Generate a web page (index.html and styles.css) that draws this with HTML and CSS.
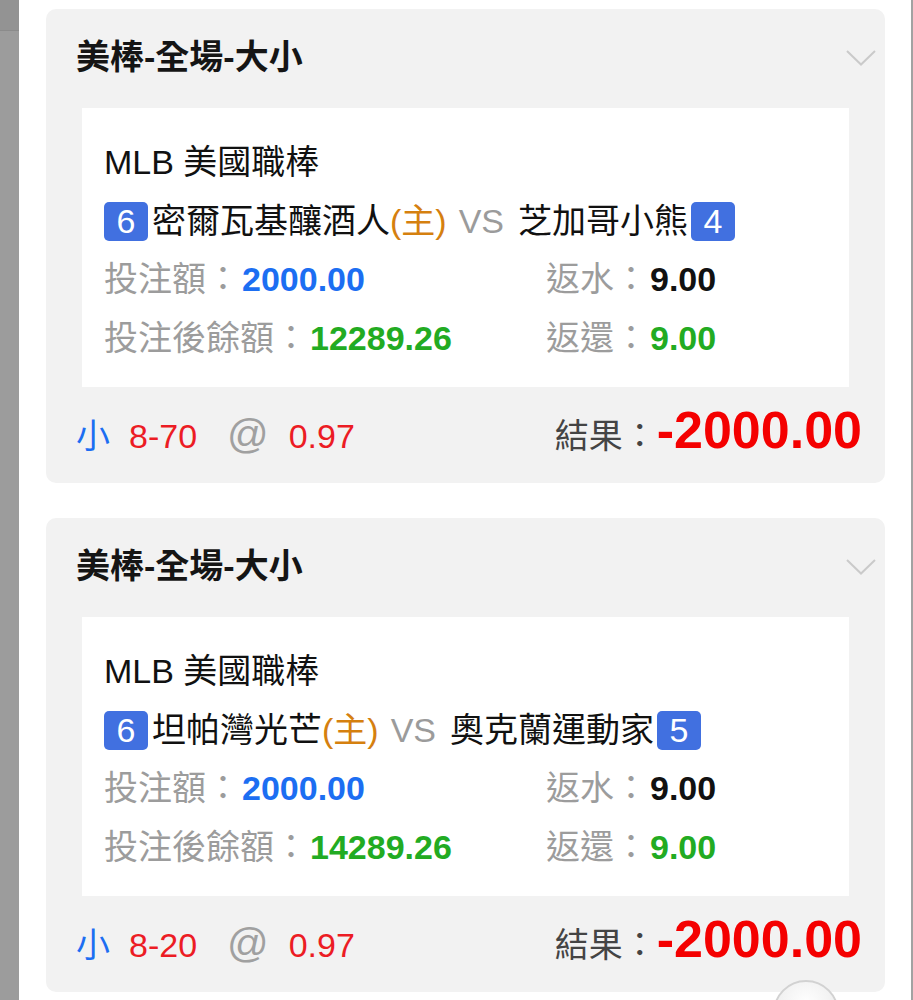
FILE: index.html
```html
<!DOCTYPE html>
<html lang="zh-Hant">
<head>
  <meta charset="UTF-8" />
  <title>注單紀錄</title>
  <meta name="viewport" content="width=device-width, initial-scale=1.0" />
  <link rel="stylesheet" href="styles.css">
</head>
<body>

  <div class="screen">
    <div class="rail-left"><div class="rail-top"></div></div>

    <main class="panel">

      <!-- bet #1 -->
      <section class="bet-card">
        <header class="bet-head">
          <h2>美棒-全場-大小</h2>
          <svg class="chevron" width="30" height="16" viewBox="0 0 30 16">
            <polyline points="1,1 15,14.5 29,1" fill="none" stroke="#cacaca" stroke-width="2" />
          </svg>
        </header>
        <div class="bet-body">
          <div class="line">MLB 美國職棒</div>
          <div class="line"><span class="rank">6</span>密爾瓦基釀酒人<span class="home">(主)</span><span class="vs">VS</span>芝加哥小熊<span class="rank rank-after">4</span></div>
          <div class="stats">
            <div class="line"><span class="lbl">投注額：</span><b class="blue">2000.00</b></div>
            <div class="line"><span class="lbl">返水：</span><b>9.00</b></div>
            <div class="line"><span class="lbl">投注後餘額：</span><b class="green">12289.26</b></div>
            <div class="line"><span class="lbl">返還：</span><b class="green">9.00</b></div>
          </div>
        </div>
        <footer class="bet-foot">
          <span class="pick">小</span>
          <span class="handicap">8-70</span>
          <span class="at">@</span>
          <span class="odds">0.97</span>
          <div class="result">
            <span class="result-lbl">結果：</span>
            <b class="result-val">-2000.00</b>
          </div>
        </footer>
      </section>

      <!-- bet #2 -->
      <section class="bet-card">
        <header class="bet-head">
          <h2>美棒-全場-大小</h2>
          <svg class="chevron" width="30" height="16" viewBox="0 0 30 16">
            <polyline points="1,1 15,14.5 29,1" fill="none" stroke="#cacaca" stroke-width="2" />
          </svg>
        </header>
        <div class="bet-body">
          <div class="line">MLB 美國職棒</div>
          <div class="line"><span class="rank">6</span>坦帕灣光芒<span class="home">(主)</span><span class="vs">VS</span>奧克蘭運動家<span class="rank rank-after">5</span></div>
          <div class="stats">
            <div class="line"><span class="lbl">投注額：</span><b class="blue">2000.00</b></div>
            <div class="line"><span class="lbl">返水：</span><b>9.00</b></div>
            <div class="line"><span class="lbl">投注後餘額：</span><b class="green">14289.26</b></div>
            <div class="line"><span class="lbl">返還：</span><b class="green">9.00</b></div>
          </div>
        </div>
        <footer class="bet-foot">
          <span class="pick">小</span>
          <span class="handicap">8-20</span>
          <span class="at">@</span>
          <span class="odds">0.97</span>
          <div class="result">
            <span class="result-lbl">結果：</span>
            <b class="result-val">-2000.00</b>
          </div>
        </footer>
      </section>

    </main>

    <div class="rail-right"></div>
  </div>

  <!-- floating button peeking in at the bottom -->
  <div class="float-btn"></div>

</body>
</html>
```

FILE: styles.css
```css
body {
  margin: 0;
  height: 1000px;
  overflow: hidden;
  font-family: "Liberation Sans", "Noto Sans CJK TC", sans-serif;
  color: #111;
  background: #fff;
}
.screen {
  display: flex;
  height: 1000px;
}
.rail-left {
  width: 19px;
  background: #9c9c9c;
  flex-shrink: 0;
}
.rail-top {
  height: 30px;
  background: #939393;
  border-bottom: 1px solid #8b8b8b;
}
.rail-right {
  width: 2px;
  background: #a2a2a2;
  flex-shrink: 0;
}
.panel {
  flex: 1;
  background: #fff;
  padding: 9px 26px 0 27px;
  display: flex;
  flex-direction: column;
  gap: 35px;
}
.bet-card {
  background: #f2f2f2;
  border-radius: 10px;
}
.bet-head {
  height: 99px;
  display: flex;
  align-items: center;
  justify-content: space-between;
  padding: 0 9px 0 30px;
}
.bet-head h2 {
  margin: -8px 0 0;
  font-size: 34px;
  font-weight: bold;
  color: #151515;
}
.chevron {
  margin-top: -1px;
}
.bet-body {
  background: #fff;
  margin: 0 36px;
  padding: 25px 22px 20px;
}
.line {
  font-size: 34px;
  line-height: 58.5px;
  height: 58.5px;
  white-space: nowrap;
}
.rank {
  display: inline-block;
  width: 44px;
  height: 39px;
  line-height: 39px;
  text-align: center;
  background: #4170e0;
  color: #fff;
  border-radius: 5px;
  margin-right: 4px;
}
.rank-after {
  margin-left: 3px;
  margin-right: 0;
}
.home {
  color: #d5800f;
}
.vs {
  color: #9b9b9b;
  margin: 0 14px 0 12px;
}
.stats {
  display: grid;
  grid-template-columns: 442px auto;
}
.lbl {
  color: #9c9c9c;
}
.stats b {
  margin-left: 2px;
  color: #111;
}
.stats b.blue {
  color: #1c6ef2;
}
.stats b.green {
  color: #22ab22;
}
.bet-foot {
  box-sizing: border-box;
  height: 96px;
  display: flex;
  align-items: baseline;
  padding: 17px 23px 0 30px;
  font-size: 34px;
  line-height: 1;
}
.pick {
  color: #1c6ef2;
  margin-right: 19px;
}
.handicap {
  color: #ec1c24;
  margin-right: 30px;
}
.at {
  font-size: 41px;
  color: #a0a0a0;
  margin-right: 20px;
}
.odds {
  color: #ec1c24;
}
.result {
  margin-left: auto;
  display: flex;
  align-items: baseline;
}
.result-lbl {
  color: #444;
}
.result-val {
  font-size: 52px;
  color: #f40000;
}
.float-btn {
  position: absolute;
  left: 773px;
  top: 980px;
  width: 62px;
  height: 62px;
  border-radius: 50%;
  border: 2px solid #d2d2d2;
  background: radial-gradient(circle at 50% 35%, #ffffff 0%, #f1f1f1 55%, #dcdcdc 100%);
}
```
